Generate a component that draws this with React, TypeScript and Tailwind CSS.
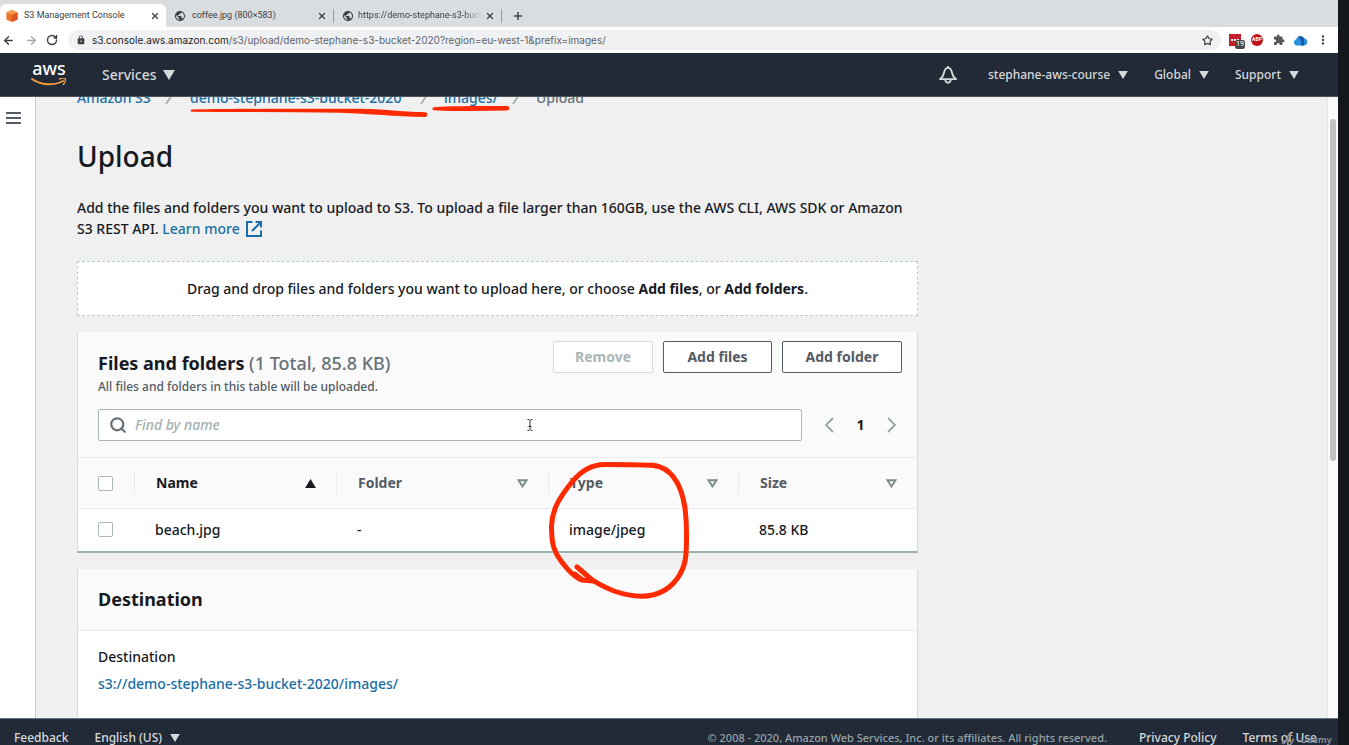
import { useState, type ReactNode } from 'react';
import { ArrowLeft, ArrowRight, RotateCw, Star, X, Plus, Search } from 'lucide-react';
import { MdExtension, MdMoreVert, MdPublic, MdLock } from 'react-icons/md';

function Caret({ className }: { className: string }) {
  return (
    <svg viewBox="0 0 12 10" className={className} aria-hidden="true">
      <path d="M0 0h12L6 10z" fill="currentColor" />
    </svg>
  );
}

function S3Cube() {
  return (
    <svg viewBox="0 0 12 12" className="size-3 shrink-0" aria-hidden="true">
      <path d="M6 0l5.6 2.4v7L6 12 .4 9.400v-7z" fill="#e8742a" />
      <path d="M6 0l5.600 2.400L6 4.800.4 2.400z" fill="#f79a4b" />
      <path d="M6 4.800l5.600-2.400v7L6 12z" fill="#d9541e" />
    </svg>
  );
}

function Tab({ icon, title, className, titleClass = '' }: { icon: ReactNode; title: string; className: string; titleClass?: string }) {
  return (
    <div className={`flex items-center ${className}`}>
      {icon}
      <span className={`overflow-hidden whitespace-nowrap text-[9px] ${titleClass}`}>{title}</span>
      <button type="button" aria-label={`Close ${title}`} className="ml-auto">
        <X className="size-2.5" strokeWidth={3} />
      </button>
    </div>
  );
}

function BrowserChrome() {
  return (
    <div className="shrink-0 font-[Roboto,sans-serif] text-[#3c4043]">
      <div className="flex h-[27px] items-end bg-[#dadde0]">
        <Tab
          className="h-[23px] w-[166px] rounded-t-md bg-white pl-1.5 pr-1.5"
          icon={<S3Cube />}
          title="S3 Management Console"
          titleClass="ml-1.5"
        />
        <Tab
          className="h-[23px] w-[167px] pl-2 pr-1.5"
          icon={<MdPublic className="size-3" />}
          title="coffee.jpg (800×583)"
          titleClass="ml-1.5"
        />
        <div className="mb-1 h-3.5 w-px bg-[#9a9ea2]" />
        <Tab
          className="h-[23px] w-[167px] pl-2 pr-1.5"
          icon={<MdPublic className="size-3 shrink-0" />}
          title="https://demo-stephane-s3-bucket"
          titleClass="ml-1 w-[124px] [mask-image:linear-gradient(to_right,black_85%,transparent)]"
        />
        <div className="mb-1 h-3.5 w-px bg-[#9a9ea2]" />
        <button type="button" aria-label="New tab" className="flex h-[23px] items-center pl-2.5">
          <Plus className="size-3" strokeWidth={3} />
        </button>
      </div>
      <div className="flex h-[26px] items-center bg-white pl-0.5 pr-2">
        <button type="button" aria-label="Back"><ArrowLeft className="size-[13px]" strokeWidth={2.6} /></button>
        <button type="button" aria-label="Forward" className="ml-2.5 text-[#a3a6a9]"><ArrowRight className="size-[13px]" strokeWidth={2.6} /></button>
        <button type="button" aria-label="Reload" className="ml-2"><RotateCw className="size-3" strokeWidth={2.8} /></button>
        <div className="ml-2.5 flex h-5 flex-1 items-center rounded-full bg-[#f0f1f3] pl-2 pr-2 font-[Inter,sans-serif] text-[10px]">
          <MdLock className="size-2.5" />
          <span className="ml-1.5 text-[#5f6368]">
            <span className="text-[#202124]">s3.console.aws.amazon.com</span>
            /s3/upload/demo-stephane-s3-bucket-2020?region=eu-west-1&amp;prefix=images/
          </span>
          <button type="button" aria-label="Bookmark" className="ml-auto"><Star className="size-[11px]" strokeWidth={2.6} /></button>
        </div>
        <div className="ml-2 flex items-center gap-2">
          <div className="relative mr-0.5 h-3 w-3 bg-[#c4202b]">
            <div className="flex h-3 items-center justify-center gap-px">
              <i className="size-0.5 bg-white" />
              <i className="size-0.5 bg-white" />
              <i className="size-0.5 bg-white" />
            </div>
            <span className="absolute left-1.5 top-1.5 rounded-xs bg-[#4a4a4a] px-px text-[7px] leading-[9px] text-white">19</span>
          </div>
          <div className="flex size-3 items-center justify-center rounded-full bg-[#c1121c] text-[5px] font-bold text-white">ABP</div>
          <MdExtension className="ml-0.5 size-3 text-[#55585c]" />
          <svg viewBox="0 0 15 11" className="h-[11px] w-[15px]" aria-hidden="true">
            <path d="M3.500 10.500a3.200 3.200 0 0 1-.3-6.200A4.300 4.300 0 0 1 11 3.300a3.700 3.700 0 0 1 .7 7.200z" fill="#2b8fdc" />
            <path d="M5 1.600A4.300 4.300 0 0 1 11 3.300v7.200H8V5z" fill="#1c57a5" />
          </svg>
          <MdMoreVert className="size-3.5" />
        </div>
      </div>
    </div>
  );
}

function AwsLogo() {
  return (
    <a href="#home" className="flex w-9 flex-col items-center text-white">
      <span className="h-[15px] text-lg font-medium leading-[10px]">aws</span>
      <svg viewBox="0 0 36 9" className="h-[9px] w-9" aria-hidden="true">
        <path d="M1 1c9 6.500 22 7 31 2" fill="none" stroke="#f29b38" strokeWidth="2" strokeLinecap="round" />
        <path d="M28.500 1c2-.8 4.800-.9 5.800-.2.4 1.600-.4 4-1.900 5.700" fill="none" stroke="#f29b38" strokeWidth="1.400" strokeLinecap="round" />
      </svg>
    </a>
  );
}

function TopNav() {
  return (
    <header className="flex h-11 shrink-0 items-center border-b border-[#4a525c] bg-[#222937] pl-[31px] pr-[39px] text-xs text-[#d5dbdb]">
      <AwsLogo />
      <button type="button" className="ml-[35px] flex items-center gap-1.5 text-sm">
        Services <Caret className="h-2.5 w-3" />
      </button>
      <button type="button" aria-label="Notifications" className="ml-auto mr-[31px]">
        <svg viewBox="0 0 18 18" className="size-[18px]" fill="none" stroke="currentColor" strokeWidth="1.800" strokeLinejoin="round" aria-hidden="true">
          <path d="M9 0v2M9 1.800C6.200 1.800 5.400 4.500 4.900 7 4.500 9.800 3 11.500 1 13.200h16c-2-1.700-3.500-3.400-3.900-6.200C12.600 4.500 11.800 1.800 9 1.800zM6.200 13.500c.3 4.300 5.300 4.300 5.600 0" />
        </svg>
      </button>
      <button type="button" className="flex items-center gap-2">stephane-aws-course <Caret className="h-2 w-2.5" /></button>
      <button type="button" className="ml-[26px] flex items-center gap-2">Global <Caret className="h-2 w-2.5" /></button>
      <button type="button" className="ml-[26px] flex items-center gap-2">Support <Caret className="h-2 w-2.5" /></button>
    </header>
  );
}

function Slash() {
  return (
    <svg viewBox="0 0 10 14" className="h-3.5 w-2.5" aria-hidden="true">
      <path d="M1 13L9 1" stroke="#a3b0b0" strokeWidth="1.800" />
    </svg>
  );
}

function Breadcrumb() {
  return (
    <nav aria-label="Breadcrumb" className="relative -mt-2.5 flex h-[22px] items-center whitespace-nowrap text-sm text-[#1a6ea5]">
      <a href="#s3" className="w-[88px]">Amazon S3</a>
      <Slash />
      <a href="#bucket" className="ml-[15px] w-[230px]">demo-stephane-s3-bucket-2020</a>
      <Slash />
      <a href="#images" className="ml-3.5 w-[68px]">images/</a>
      <Slash />
      <span className="ml-3.5 text-[#687078]">Upload</span>
      <svg viewBox="0 0 320 14" className="absolute left-[113px] top-[18px] h-3.5 w-80" fill="#ff2a00" aria-hidden="true">
        <path d="M1.500 4.500C50 3.600 120 3.800 165 3.800c30 .2 45 3 70 3.400a2.400 2.400 0 0 1 0 4.800C205 11.500 180 9 150 7.800 100 6.800 50 7.200 1.500 6.700a1.200 1.200 0 0 1 0-2.200z" />
        <path d="M244 2.200c20-1.400 50-1.200 73-1.200a2.200 2.200 0 0 1 0 4.600c-25 .6-52 .8-73-.4a1.500 1.500 0 0 1 0-3z" />
      </svg>
    </nav>
  );
}

const buttonBase = 'h-8 rounded-xs border bg-white text-sm font-bold';

function SortIcon({ active = false }: { active?: boolean }) {
  return active ? (
    <svg viewBox="0 0 12 10" className="h-[9px] w-[11px]" aria-hidden="true"><path d="M6 0l6 10H0z" fill="#16191f" /></svg>
  ) : (
    <svg viewBox="0 0 11 9" className="h-[9px] w-[11px]" aria-hidden="true"><path d="M1.500 1.200h8L5.500 7.400z" fill="none" stroke="#7b8b8b" strokeWidth="1.900" /></svg>
  );
}

const columns = [
  { label: 'Name', width: 'w-[202px]' },
  { label: 'Folder', width: 'w-[212px]' },
  { label: 'Type', width: 'w-[190px]' },
  { label: 'Size', width: '' },
];

const files = [{ name: 'beach.jpg', folder: '-', type: 'image/jpeg', size: '85.8 KB' }];

const checkbox = 'block size-[15px] appearance-none rounded-xs border border-[#aab7b8] bg-white checked:bg-[#1a6ea5]';

function FilesPanel() {
  const [query, setQuery] = useState('');
  return (
    <section className="relative mt-4 border-x border-b-2 border-x-[#d5dbdb] border-b-[#9fb0b0] bg-[#fafafa]">
      <div className="flex items-start justify-between pl-5 pr-[15px] pt-[9px]">
        <div className="pt-2.5">
          <h2 className="text-lg leading-6 font-bold text-[#16191f]">
            Files and folders <span className="font-medium text-[#687078]">(1 Total, 85.8 KB)</span>
          </h2>
          <p className="text-xs leading-6 text-[#545b64]">All files and folders in this table will be uploaded.</p>
        </div>
        <div className="flex gap-2.5">
          <button type="button" disabled className={`${buttonBase} w-[100px] border-[#d5dbdb] text-[#aab7b8]`}>Remove</button>
          <button type="button" className={`${buttonBase} w-[109px] border-[#545b64] text-[#545b64]`}>Add files</button>
          <button type="button" className={`${buttonBase} w-[120px] border-[#545b64] text-[#545b64]`}>Add folder</button>
        </div>
      </div>
      <div className="flex items-center pb-4 pl-5 pr-5 pt-2.5">
        <label className="flex h-8 flex-1 items-center rounded-xs border border-[#aab7b8] bg-white px-2.5">
          <Search className="size-[18px] text-[#687078]" strokeWidth={3} />
          <span className="sr-only">Find by name</span>
          <input
            type="text"
            value={query}
            onChange={(event) => setQuery(event.target.value)}
            placeholder="Find by name"
            className="ml-2 flex-1 text-sm outline-none placeholder:italic placeholder:text-[#a3b1b1]"
          />
        </label>
        <div className="ml-[22px] flex items-center text-[#95a5a6]">
          <button type="button" aria-label="Previous page">
            <svg viewBox="0 0 10 16" className="h-4 w-2.5" fill="none" stroke="currentColor" strokeWidth="1.800" aria-hidden="true"><path d="M9 1L2 8l7 7" /></svg>
          </button>
          <span className="w-[53px] text-center text-sm font-bold text-[#16191f]">1</span>
          <button type="button" aria-label="Next page">
            <svg viewBox="0 0 10 16" className="h-4 w-2.5" fill="none" stroke="currentColor" strokeWidth="1.800" aria-hidden="true"><path d="M1 1l7 7-7 7" /></svg>
          </button>
        </div>
      </div>
      <table className="w-full table-fixed border-t border-[#eaeded] text-left text-sm">
        <thead>
          <tr className="h-[51px] border-b border-[#eaeded]">
            <th className="w-14 pl-5"><input type="checkbox" aria-label="Select all files" className={checkbox} /></th>
            {columns.map((column, index) => (
              <th key={column.label} className={`${column.width} p-0 font-bold`}>
                <button
                  type="button"
                  className={`flex h-6 w-full items-center justify-between border-l border-[#eaeded] pl-[21px] pr-5 ${index === 0 ? 'text-[#16191f]' : 'text-[#545b64]'}`}
                >
                  {column.label}
                  <SortIcon active={index === 0} />
                </button>
              </th>
            ))}
          </tr>
        </thead>
        <tbody className="bg-white text-[#16191f]">
          {files.map((file) => (
            <tr key={file.name} className="h-[42px]">
              <td className="pl-5"><input type="checkbox" aria-label={`Select ${file.name}`} className={checkbox} /></td>
              <td className="pl-[21px]">{file.name}</td>
              <td className="pl-[21px]">{file.folder}</td>
              <td className="pl-[21px]">{file.type}</td>
              <td className="pl-[21px]">{file.size}</td>
            </tr>
          ))}
        </tbody>
      </table>
      <svg viewBox="0 0 144 142" className="pointer-events-none absolute left-[470px] top-[128px] h-[142px] w-36" fill="none" stroke="#ff2a00" strokeLinecap="round" aria-hidden="true">
        <path d="M108 6C100 4.500 80 4.500 57 4.500 42 4.500 32 12 24 22 11 38 4 50 3.500 66 3.500 84 6 92 13 101 19 109 27 118 34 120L45 121" strokeWidth="5" />
        <path d="M104 5C122 7 133 22 137 48 138.500 60 139 76 138 94 137 108 130 122 117 130 104 138 86 138 66 131 56 127 50 124 43 119L29 107" strokeWidth="5" strokeLinejoin="round" />
        <path d="M27 113L36 120" strokeWidth="3" />
      </svg>
      <svg viewBox="0 0 6 12" className="pointer-events-none absolute left-[449px] top-[87px] h-3 w-1.5" fill="none" stroke="#333" aria-hidden="true">
        <path d="M.5.5h1.500l1 1 1-1h1.500M3 1.500v9M.5 11.500h1.500l1-1 1 1h1.500M1.500 7.500h3" />
      </svg>
    </section>
  );
}

function DestinationPanel() {
  return (
    <section className="mt-4 border-x border-[#d5dbdb] bg-white pb-16 text-sm">
      <h2 className="border-b border-[#eaeded] bg-[#fafafa] px-5 py-[18px] text-lg leading-[25px] font-bold text-[#16191f]">Destination</h2>
      <div className="px-5 pt-3 leading-[27px]">
        <p className="text-[#16191f]">Destination</p>
        <a href="#destination" className="text-[#1a6ea5]">s3://demo-stephane-s3-bucket-2020/images/</a>
      </div>
    </section>
  );
}

function Footer() {
  return (
    <footer className="flex h-[27px] shrink-0 items-start overflow-hidden border-t border-[#6b737c] bg-[#222937] pl-3.5 pr-[21px] text-xs leading-[38px] text-[#d5dbdb]">
      <button type="button">Feedback</button>
      <button type="button" className="ml-[26px] flex items-center gap-2">English (US) <Caret className="h-2 w-2.5" /></button>
      <p className="ml-auto text-[11px] text-[#95a5a6]">© 2008 - 2020, Amazon Web Services, Inc. or its affiliates. All rights reserved.</p>
      <a href="#privacy" className="ml-8">Privacy Policy</a>
      <span className="relative ml-[26px]">
        <a href="#terms">Terms of Use</a>
        <span className="absolute left-[38px] top-0.5 flex items-center gap-1.5 text-[9px] font-semibold text-[#8d939a]">
          <svg viewBox="0 0 14 14" className="size-3.5" fill="none" stroke="currentColor" strokeWidth="1.600" aria-hidden="true">
            <path d="M1 9c2 4 4-1 5-4s4-6 3-2-4 9-1 9 3-5 5-6" />
          </svg>
          Udemy
        </span>
      </span>
    </footer>
  );
}

export default function App() {
  return (
    <div className="flex h-screen overflow-hidden bg-[#14181c] pr-[11px] font-['Noto_Sans',sans-serif] font-medium">
      <div className="flex min-w-0 flex-1 flex-col">
        <div className="font-normal"><BrowserChrome /></div>
        <TopNav />
        <div className="flex min-h-0 flex-1 overflow-hidden bg-[#f0f0f0]">
          <aside className="w-9 shrink-0 border-r border-[#c9cccc] bg-white pl-1.5 pt-[15px]">
            <button type="button" aria-label="Open menu" className="block">
              <svg viewBox="0 0 15 12" className="h-3 w-[15px]" stroke="#545b64" strokeWidth="2" aria-hidden="true">
                <path d="M0 1h15M0 6h15M0 11h15" />
              </svg>
            </button>
          </aside>
          <main className="min-w-0 flex-1 px-[41px]">
            <div className="max-w-[841px]">
              <Breadcrumb />
              <h1 className="mt-[29px] text-[28px] leading-9 text-[#16191f]">Upload</h1>
              <p className="mt-[23px] text-sm leading-[21px] text-[#16191f]">
                Add the files and folders you want to upload to S3. To upload a file larger than 160GB, use the AWS CLI, AWS SDK or Amazon S3 REST API.{' '}
                <a href="#learn" className="text-[#1a6ea5]">
                  Learn more
                  <svg viewBox="0 0 16 16" className="ml-1.5 inline size-4 align-[-3px]" fill="none" stroke="currentColor" strokeWidth="2" aria-hidden="true">
                    <path d="M6.500 1H1v14h14V9.500M9.500 1H15v5.500M15 1L6 10" />
                  </svg>
                </a>
              </p>
              <div className="mt-[22px] flex h-[55px] items-center justify-center border border-dashed border-[#b5cdcd] bg-white text-sm text-[#16191f]">
                <p>Drag and drop files and folders you want to upload here, or choose <b>Add files</b>, or <b>Add folders</b>.</p>
              </div>
              <FilesPanel />
              <DestinationPanel />
            </div>
          </main>
          <div className="w-[11px] shrink-0 border-l border-[#e4e4e4] bg-[#fafafa] pl-0.5 pt-[22px]">
            <div className="h-[342px] w-1.5 rounded-full bg-[#c1c1c1]" />
          </div>
        </div>
        <Footer />
      </div>
    </div>
  );
}
